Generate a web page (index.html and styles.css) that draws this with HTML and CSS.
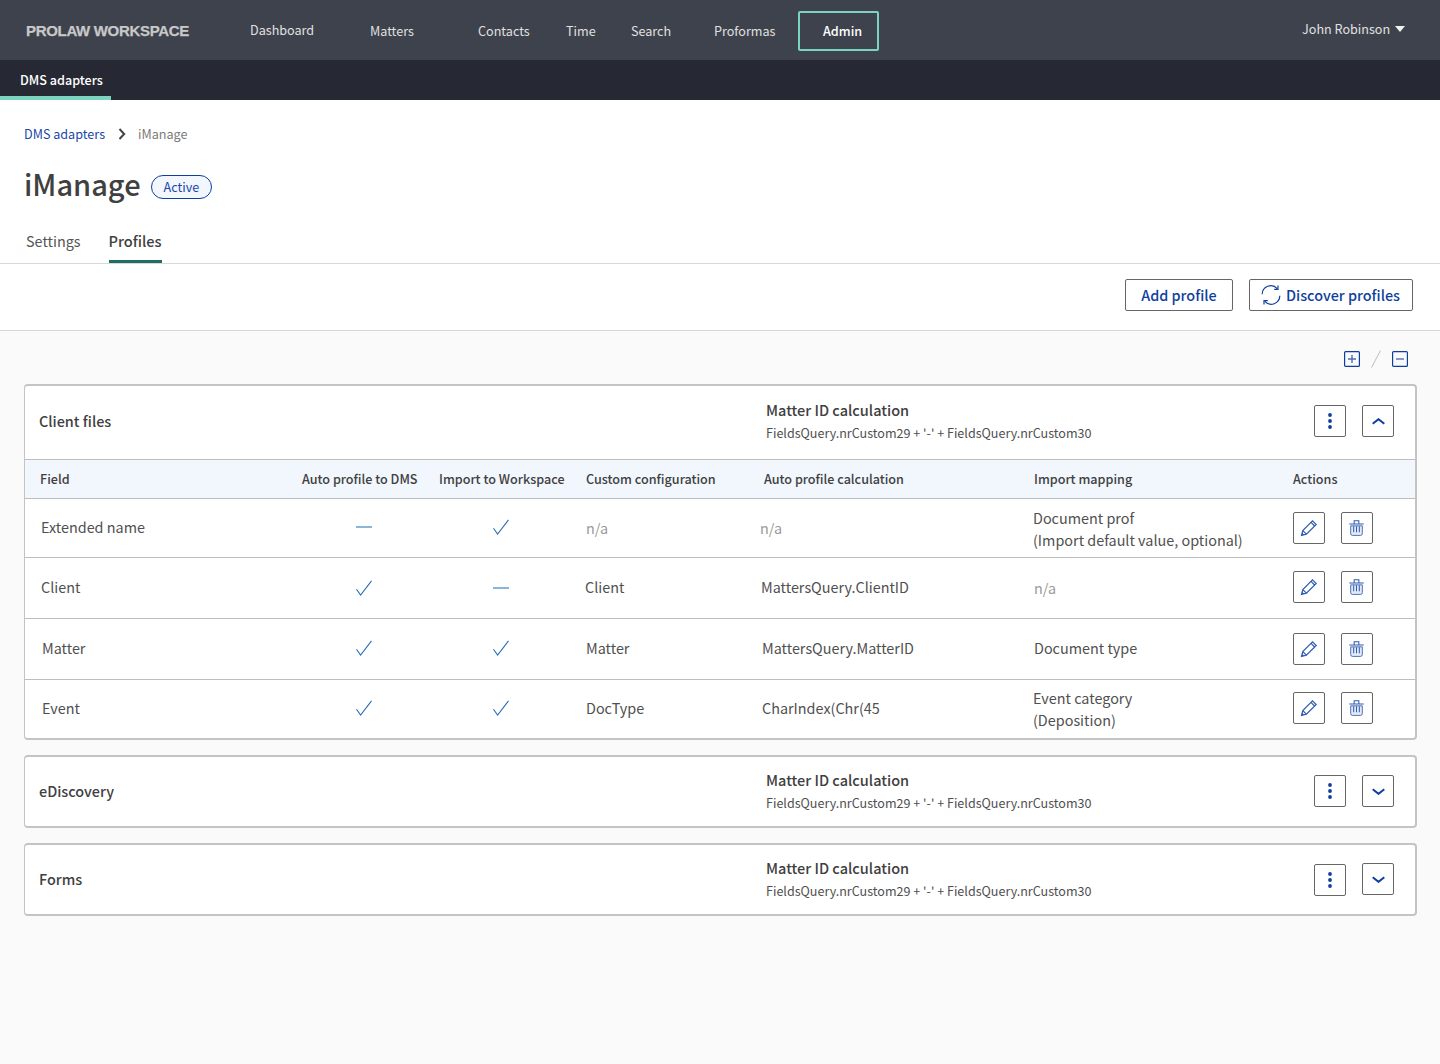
FILE: index.html
```html
<!DOCTYPE html>
<html lang="en">
<head>
<meta charset="utf-8">
<title>iManage</title>
<link rel="stylesheet" href="styles.css">
</head>
<body>
<svg class="sprite" aria-hidden="true">
  <symbol id="i-check" viewBox="0 0 16 16"><path d="M.5 9.2 4.6 15 15.5 .8" fill="none" stroke="#2a6fb5" stroke-width="1.1"/></symbol>
  <symbol id="i-dash" viewBox="0 0 16 16"><path d="M0 8h16" fill="none" stroke="#6fa4cf" stroke-width="1.6"/></symbol>
  <symbol id="i-edit" viewBox="0 0 18 18"><path d="M1.5 16.5 2.8 11.6 12.5 1.8 16.2 5.5 6.4 15.2Z M2.8 11.6 6.4 15.2 M11 3.4 14.6 7" fill="none" stroke="#2f5bb0" stroke-width="1.2"/><path d="M1.5 16.5 2.2 13.8 4.2 15.8Z" fill="#2f5bb0"/></symbol>
  <symbol id="i-trash" viewBox="0 0 16 17"><path d="M.3 4.2h15.4 M5.5 4.2V.8h5v3.4" fill="none" stroke="#2f5bb0" stroke-width="1.1"/><path d="M1.8 6.2h12.4v8.2a2 2 0 0 1-2 2H3.8a2 2 0 0 1-2-2Z" fill="#e3eaf6" stroke="#2f5bb0" stroke-width=".9"/><path d="M5 6.5v6.5 M8 6.5v6.5 M11 6.5v6.5" fill="none" stroke="#2f5bb0" stroke-width="1.1"/></symbol>
  <symbol id="i-more" viewBox="0 0 4 16"><circle cx="2" cy="2" r="1.9" fill="#0f3f9e"/><circle cx="2" cy="8" r="1.9" fill="#0f3f9e"/><circle cx="2" cy="14" r="1.9" fill="#0f3f9e"/></symbol>
  <symbol id="i-up" viewBox="0 0 13 7"><path d="M.7 5.8 6.5 1.2 12.3 5.8" fill="none" stroke="#0f3f9e" stroke-width="2"/></symbol>
  <symbol id="i-down" viewBox="0 0 13 7"><path d="M.7 1.2 6.5 5.8 12.3 1.2" fill="none" stroke="#0f3f9e" stroke-width="2"/></symbol>
</svg>

<header class="topbar">
  <div class="logo">PROLAW WORKSPACE</div>
  <nav class="mainnav">
    <a class="navitem navitem-high">Dashboard</a>
    <a class="navitem">Matters</a>
    <a class="navitem">Contacts</a>
    <a class="navitem">Time</a>
    <a class="navitem">Search</a>
    <a class="navitem">Proformas</a>
    <a class="navitem-active">Admin</a>
  </nav>
  <div class="user">John Robinson <span class="caret"></span></div>
</header>
<div class="subbar"><a class="subitem">DMS adapters</a></div>

<section class="pagehead">
  <div class="crumbs">
    <a class="crumb-link">DMS adapters</a>
    <svg class="crumb-sep" viewBox="0 0 8 12"><path d="M1.5 1 6.2 6 1.5 11" fill="none" stroke="#444" stroke-width="2"/></svg>
    <span class="crumb-current">iManage</span>
  </div>
  <div class="titleline">
    <h1 class="title">iManage</h1>
    <span class="badge">Active</span>
  </div>
  <div class="tabs">
    <a class="tab">Settings</a>
    <a class="tab tab-active">Profiles</a>
  </div>
</section>

<section class="toolbar">
  <button class="btn btn-add">Add profile</button>
  <button class="btn btn-discover">
    <svg class="sync" viewBox="0 0 20 20"><path d="M1.2 9.2A8.6 8.6 0 0 1 16.2 3.6 M18.8 10.8A8.6 8.6 0 0 1 3.8 16.4" fill="none" stroke="#0f3f9e" stroke-width="1.2"/><path d="M17 .6v3.8h-3.8 M3 19.4v-3.8h3.8" fill="none" stroke="#0f3f9e" stroke-width="1.2"/></svg>
    Discover profiles
  </button>
</section>

<main class="content">
  <div class="expanders">
    <svg class="exp" viewBox="0 0 16 16"><rect x=".6" y=".6" width="14.8" height="14.8" rx="1" fill="none" stroke="#0f3f9e" stroke-width="1.2"/><path d="M4 8h8 M8 4v8" stroke="#4a6fb5" stroke-width="1.4"/></svg>
    <svg class="exp-slash" viewBox="0 0 10 18"><path d="M.5 17.5 9.5 .5" stroke="#bdbdbd" stroke-width="1"/></svg>
    <svg class="exp" viewBox="0 0 16 16"><rect x=".6" y=".6" width="14.8" height="14.8" rx="1" fill="none" stroke="#0f3f9e" stroke-width="1.2"/><path d="M4 8h8" stroke="#4a6fb5" stroke-width="1.4"/></svg>
  </div>

  <article class="card">
    <div class="cardhead">
      <div class="cardname">Client files</div>
      <div class="calc">
        <div class="calc-title">Matter ID calculation</div>
        <div class="calc-sub">FieldsQuery.nrCustom29 + '-' + FieldsQuery.nrCustom30</div>
      </div>
      <button class="iconbtn"><svg class="i-more"><use href="#i-more"/></svg></button>
      <button class="iconbtn"><svg class="i-chev"><use href="#i-up"/></svg></button>
    </div>
    <div class="row row-head">
      <div>Field</div><div>Auto profile to DMS</div><div>Import to Workspace</div><div>Custom configuration</div><div>Auto profile calculation</div><div>Import mapping</div><div>Actions</div>
    </div>
    <div class="row row-1">
      <div class="nudge-1 cell-up">Extended name</div>
      <div class="mark cell-up"><svg class="i-mark"><use href="#i-dash"/></svg></div>
      <div class="mark cell-up"><svg class="i-mark"><use href="#i-check"/></svg></div>
      <div class="na">n/a</div>
      <div class="na nudge-n4">n/a</div>
      <div class="nudge-n1 multi">Document prof<br>(Import default value, optional)</div>
      <div class="actions"><button class="iconbtn"><svg class="i-edit"><use href="#i-edit"/></svg></button><button class="iconbtn"><svg class="i-trash"><use href="#i-trash"/></svg></button></div>
    </div>
    <div class="row row-2">
      <div class="nudge-1">Client</div>
      <div class="mark"><svg class="i-mark mark-down"><use href="#i-check"/></svg></div>
      <div class="mark"><svg class="i-mark mark-down"><use href="#i-dash"/></svg></div>
      <div class="nudge-n1">Client</div>
      <div class="nudge-n3">MattersQuery.ClientID</div>
      <div class="na cell-down">n/a</div>
      <div class="actions"><button class="iconbtn"><svg class="i-edit"><use href="#i-edit"/></svg></button><button class="iconbtn"><svg class="i-trash"><use href="#i-trash"/></svg></button></div>
    </div>
    <div class="row row-3">
      <div class="nudge-2 cell-up">Matter</div>
      <div class="mark cell-up"><svg class="i-mark"><use href="#i-check"/></svg></div>
      <div class="mark cell-up"><svg class="i-mark"><use href="#i-check"/></svg></div>
      <div class="cell-up">Matter</div>
      <div class="nudge-n2 cell-up">MattersQuery.MatterID</div>
      <div class="cell-up">Document type</div>
      <div class="actions"><button class="iconbtn"><svg class="i-edit"><use href="#i-edit"/></svg></button><button class="iconbtn"><svg class="i-trash"><use href="#i-trash"/></svg></button></div>
    </div>
    <div class="row row-4">
      <div class="nudge-2">Event</div>
      <div class="mark"><svg class="i-mark"><use href="#i-check"/></svg></div>
      <div class="mark"><svg class="i-mark"><use href="#i-check"/></svg></div>
      <div>DocType</div>
      <div class="nudge-n2">CharIndex(Chr(45</div>
      <div class="nudge-n1 multi">Event category<br>(Deposition)</div>
      <div class="actions"><button class="iconbtn"><svg class="i-edit"><use href="#i-edit"/></svg></button><button class="iconbtn"><svg class="i-trash"><use href="#i-trash"/></svg></button></div>
    </div>
  </article>

  <article class="card">
    <div class="cardhead cardhead-closed">
      <div class="cardname">eDiscovery</div>
      <div class="calc">
        <div class="calc-title">Matter ID calculation</div>
        <div class="calc-sub">FieldsQuery.nrCustom29 + '-' + FieldsQuery.nrCustom30</div>
      </div>
      <button class="iconbtn"><svg class="i-more"><use href="#i-more"/></svg></button>
      <button class="iconbtn"><svg class="i-chev"><use href="#i-down"/></svg></button>
    </div>
  </article>

  <article class="card">
    <div class="cardhead cardhead-closed">
      <div class="cardname">Forms</div>
      <div class="calc">
        <div class="calc-title">Matter ID calculation</div>
        <div class="calc-sub">FieldsQuery.nrCustom29 + '-' + FieldsQuery.nrCustom30</div>
      </div>
      <button class="iconbtn more-low"><svg class="i-more"><use href="#i-more"/></svg></button>
      <button class="iconbtn"><svg class="i-chev"><use href="#i-down"/></svg></button>
    </div>
  </article>
</main>
</body>
</html>
```
FILE: styles.css
```css
* { box-sizing: border-box; }
html, body { margin: 0; padding: 0; }
body {
  min-height: 1064px;
  background: #fafafa;
  color: #404040;
  font-family: "Noto Sans CJK JP", "Noto Sans", sans-serif;
  font-size: 14.4px;
  overflow: hidden;
}
.sprite { display: none; }

.topbar {
  display: flex;
  align-items: center;
  height: 60px;
  background: #3e424d;
  color: #e0e0e0;
}
.logo {
  width: 250px;
  padding-left: 26px;
  font-family: "Liberation Sans", Arial, sans-serif;
  font-weight: 700;
  font-size: 15px;
  letter-spacing: -.32px;
  white-space: nowrap;
  color: #c8c8c8;
  -webkit-text-stroke: .25px #c8c8c8;
}
.mainnav {
  display: grid;
  grid-template-columns: 120px 108px 88px 65px 83px 84px 81px;
  align-items: center;
  margin-top: 2px;
  font-size: 12.6px;
}
.navitem { line-height: 20px; }
.navitem-high { padding-bottom: 2px; }
.navitem-active {
  height: 40px;
  padding: 8px 0 0 23px;
  border: 2px solid #7dd3c1;
  border-radius: 2px;
  line-height: 20px;
  color: #fff;
  font-weight: 500;
}
.user {
  margin-left: auto;
  padding: 0 35px 2px 0;
  font-size: 12.6px;
  line-height: 20px;
}
.caret {
  display: inline-block;
  width: 0;
  height: 0;
  margin-left: 2px;
  vertical-align: 2px;
  border-left: 5.5px solid transparent;
  border-right: 5.5px solid transparent;
  border-top: 6px solid #f0f0f0;
}
.subbar {
  display: flex;
  height: 40px;
  background: #262833;
}
.subitem {
  width: 111px;
  padding: 10px 0 0 20px;
  border-bottom: 4px solid #7dd3c1;
  color: #fff;
  font-size: 12.6px;
  font-weight: 500;
  line-height: 20px;
  white-space: nowrap;
}

.pagehead {
  height: 164px;
  padding-top: 23px;
  background: #fff;
  border-bottom: 1px solid #d8d8d8;
}
.crumbs {
  display: flex;
  align-items: center;
  height: 20px;
  padding-left: 24px;
  font-size: 12.6px;
}
.crumb-link { color: #1a47a8; }
.crumb-sep { width: 8px; height: 12px; margin: 1px 12px 0 13px; }
.crumb-current { color: #7a7a7a; }
.titleline {
  display: flex;
  align-items: center;
  height: 40px;
  margin-top: 20px;
  padding-left: 24px;
}
.title {
  margin: 0;
  color: #404040;
  font-size: 29px;
  font-weight: 500;
  line-height: 40px;
}
.badge {
  height: 24px;
  margin-left: 10px;
  padding: 0 12px;
  margin-top: 7px;
  background: #f2f6fd;
  border: 1px solid #0f3f9e;
  border-radius: 12px;
  color: #1a47a8;
  font-size: 12.6px;
  line-height: 22px;
}
.tabs {
  display: flex;
  gap: 28px;
  height: 39px;
  margin-top: 21px;
  padding-left: 26px;
}
.tab {
  height: 39px;
  padding-top: 5px;
  color: #555;
  line-height: 24px;
}
.tab-active {
  border-bottom: 3px solid #1d6f5f;
  color: #404040;
  font-size: 14.6px;
  font-weight: 500;
}

.toolbar {
  display: flex;
  justify-content: flex-end;
  gap: 16px;
  height: 67px;
  padding: 15px 27px 0 0;
  background: #fff;
  border-bottom: 1px solid #d8d8d8;
}
.btn {
  display: flex;
  align-items: center;
  height: 32px;
  padding: 0 15px 2px;
  background: #fff;
  border: 1px solid #666;
  border-radius: 2px;
  color: #0f3f9e;
  font: 500 14.4px "Noto Sans CJK JP", "Noto Sans", sans-serif;
}
.btn-add { width: 108px; justify-content: center; }
.btn-discover { padding: 0 12px 2px 11px; }
.sync { width: 20px; height: 20px; margin: 2px 5px 0 0; }

.content { padding: 19px 23px 0 24px; }
.expanders {
  display: flex;
  justify-content: flex-end;
  align-items: center;
  height: 18px;
  padding-right: 9px;
  margin-bottom: 16px;
}
.exp { width: 16px; height: 16px; }
.exp-slash { width: 10px; height: 18px; margin: 0 11px; }

.card {
  margin-bottom: 15px;
  background: #fff;
  border: 1px solid #c4c4c4;
  border-top-width: 2px;
  border-bottom-width: 2px;
  border-left-width: 1.5px;
  border-right-width: 2px;
  border-radius: 4px;
  overflow: hidden;
}
.cardhead {
  display: flex;
  align-items: center;
  height: 73px;
  padding: 0 21px 3px 14px;
  gap: 16px;
}
.cardhead-closed { height: 69px; padding-bottom: 1px; }
.cardname {
  width: 711px;
  font-weight: 500;
  line-height: 20px;
}
.calc { flex: 1; }
.calc-title { font-size: 14.5px; font-weight: 500; line-height: 22px; }
.calc-sub { margin-top: 2px; font-size: 12.56px; line-height: 20px; color: #505050; }

.iconbtn {
  display: flex;
  align-items: center;
  justify-content: center;
  flex: none;
  width: 32px;
  height: 32px;
  padding: 0;
  background: #fff;
  border: 1px solid #666;
  border-radius: 2px;
}
.more-low { margin-top: 2px; }
.i-more { width: 4px; height: 16px; }
.i-chev { width: 13px; height: 7px; }
.i-edit { width: 18px; height: 18px; }
.i-trash { width: 15px; height: 16px; margin-right: 1px; }
.i-mark { display: block; width: 16px; height: 16px; }
.mark-down { margin-top: 2px; }

.row {
  display: grid;
  grid-template-columns: 262px 137px 147px 178px 270px 259px 1fr;
  align-items: center;
  padding-left: 15px;
  border-top: 1px solid #bdbdbd;
  color: #505050;
  line-height: 22px;
}
.row-head {
  height: 39px;
  background: #f2f6fd;
  color: #404040;
  font-size: 12.6px;
  font-weight: 500;
}
.row-1 { height: 59px; }
.row-2 { height: 61px; padding-bottom: 2px; }
.row-3 { height: 61px; }
.row-4 { height: 59px; padding-bottom: 3px; }
.cell-up { margin-bottom: 2px; }
.cell-down { margin-top: 2px; }
.mark { padding-left: 54px; }
.na { color: #9a9a9a; }
.multi { margin-top: 2px; line-height: 22px; }
.nudge-1 { margin-left: 1px; }
.nudge-2 { margin-left: 2px; }
.nudge-n1 { margin-left: -1px; }
.nudge-n2 { margin-left: -2px; }
.nudge-n3 { margin-left: -3px; }
.nudge-n4 { margin-left: -4px; }
.actions { display: flex; gap: 16px; }
```
